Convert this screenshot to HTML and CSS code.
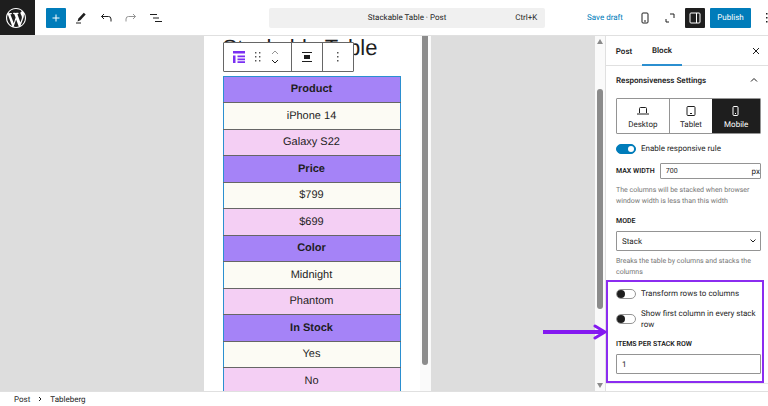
FILE: index.html
```html
<!DOCTYPE html>
<html lang="en">
<head>
    <meta charset="UTF-8">
    <meta name="viewport" content="width=device-width, initial-scale=1.0">
    <link rel="stylesheet" href="styles.css">
    <title>Stackable Table</title>
</head>
<body>
<header class="header">
    <a class="logo" href="#" aria-label="View posts">
        <svg width="20" height="20" viewBox="0 0 20 20" fill="#fff">
            <path d="M20 10c0-5.51-4.49-10-10-10C4.48 0 0 4.49 0 10c0 5.52 4.48 10 10 10 5.51 0 10-4.48 10-10zM7.78 15.37L4.37 6.22c.55-.02 1.17-.08 1.17-.08.5-.06.44-1.13-.06-1.11 0 0-1.45.11-2.37.11-.18 0-.37 0-.58-.01C4.12 2.69 6.87 1.11 10 1.11c2.33 0 4.45.87 6.05 2.34-.68-.11-1.65.39-1.65 1.58 0 .74.45 1.36.9 2.1.35.61.55 1.36.55 2.46 0 1.49-1.4 5-1.4 5l-3.03-8.37c.54-.02.82-.17.82-.17.5-.05.44-1.25-.06-1.22 0 0-1.44.12-2.38.12-.87 0-2.33-.12-2.33-.12-.5-.03-.56 1.2-.06 1.22l.92.08 1.26 3.41zM17.41 10c.24-.64.74-1.87.43-4.25.7 1.29 1.05 2.71 1.05 4.25 0 3.29-1.73 6.24-4.4 7.78.97-2.59 1.94-5.2 2.92-7.78zM6.1 18.09C3.12 16.65 1.11 13.53 1.11 10c0-1.3.23-2.48.72-3.59C3.25 10.3 4.67 14.2 6.1 18.09zm4.03-6.63l2.58 6.98c-.86.29-1.76.45-2.71.45-.79 0-1.57-.11-2.29-.33.81-2.38 1.62-4.74 2.42-7.1z"/>
        </svg>
    </a>
    <div class="tools">
        <button class="tool tool_add" aria-label="Add block">
            <svg width="8" height="8" viewBox="0 0 8 8" stroke="#fff"><path d="M4 .500v7M.500 4h7"/></svg>
        </button>
        <button class="tool" aria-label="Tools">
            <svg width="12" height="12" viewBox="0 0 12 12"><path d="M8.800.800l1.900 1.700-5.300 5.800-2.900 1.100.900-2.900z" fill="#1e1e1e"/><path d="M1 11h5" stroke="#1e1e1e"/></svg>
        </button>
        <button class="tool" aria-label="Undo">
            <svg width="12" height="12" viewBox="0 0 12 12" fill="none" stroke="#1e1e1e"><path d="M4 2L1.500 4.500 4 7M1.500 4.500H8.500Q11 4.500 11 7v2.500"/></svg>
        </button>
        <button class="tool" aria-label="Redo">
            <svg width="12" height="12" viewBox="0 0 12 12" fill="none" stroke="#949494"><path d="M8 2l2.500 2.500L8 7M10.500 4.500H3.500Q1 4.500 1 7v2.500"/></svg>
        </button>
        <button class="tool" aria-label="Document overview">
            <svg width="12" height="12" viewBox="0 0 12 12" stroke="#1e1e1e"><path d="M0 2.500h7M3 6h6M5 9.500h7"/></svg>
        </button>
    </div>
    <button class="command">
        <span class="command-title">Stackable Table · Post</span>
        <span>Ctrl+K</span>
    </button>
    <div class="actions">
        <button class="save">Save draft</button>
        <button class="tool" aria-label="Preview">
            <svg width="8" height="12" viewBox="0 0 8 12" fill="none" stroke="#1e1e1e"><rect x="1" y="1" width="6" height="10" rx="1"/><path d="M3 9h2"/></svg>
        </button>
        <button class="tool" aria-label="View">
            <svg width="10" height="10" viewBox="0 0 10 10" fill="none" stroke="#1e1e1e"><path d="M5 1h4v4M1 6v3h3"/></svg>
        </button>
        <button class="tool tool_active" aria-label="Settings">
            <svg width="12" height="12" viewBox="0 0 12 12" fill="none" stroke="#fff"><rect x="1" y="1" width="10" height="10" rx="1"/><path d="M7.500 1v10"/></svg>
        </button>
        <button class="publish">Publish</button>
        <button class="more" aria-label="Options">
            <svg width="2" height="12" viewBox="0 0 2 12" fill="#1e1e1e"><path d="M0 1h1.500v1.500H0zM0 5h1.500v1.500H0zM0 9h1.500v1.500H0z"/></svg>
        </button>
    </div>
</header>

<div class="workspace">
    <main class="canvas">
        <div class="device">
            <div class="post">
                <h1 class="post-title">Stackable Table</h1>
                <table class="table">
                    <tbody>
                    <tr><th>Product</th></tr>
                    <tr><td>iPhone 14</td></tr>
                    <tr><td class="pink">Galaxy S22</td></tr>
                    <tr><th>Price</th></tr>
                    <tr><td>$799</td></tr>
                    <tr><td class="pink">$699</td></tr>
                    <tr><th>Color</th></tr>
                    <tr><td>Midnight</td></tr>
                    <tr><td class="pink">Phantom</td></tr>
                    <tr><th>In Stock</th></tr>
                    <tr><td>Yes</td></tr>
                    <tr><td class="pink">No</td></tr>
                    </tbody>
                </table>
                <div class="toolbar">
                    <div class="toolbar-group toolbar-group_wide">
                        <button aria-label="Tableberg">
                            <svg width="12" height="12" viewBox="0 0 12 12" fill="#7a2ff2"><path d="M0 0h12v2.500H0zM0 4.500h2.500V12H0zM4.500 4.500H12v1.800H4.500zM4.500 7.500H12v1.800H4.500zM4.500 10.300H12V12H4.500z"/></svg>
                        </button>
                        <button aria-label="Drag">
                            <svg width="6" height="10" viewBox="0 0 6 10" fill="#555"><path d="M0 0h1.400v1.400H0zM4 0h1.400v1.400H4zM0 4h1.400v1.400H0zM4 4h1.400v1.400H4zM0 8h1.400v1.400H0zM4 8h1.400v1.400H4z"/></svg>
                        </button>
                        <button aria-label="Move up or down">
                            <svg width="8" height="14" viewBox="0 0 8 14" fill="none"><path d="M1 4l3-3 3 3" stroke="#949494"/><path d="M1 10l3 3 3-3" stroke="#1e1e1e"/></svg>
                        </button>
                    </div>
                    <div class="toolbar-group">
                        <button aria-label="Align">
                            <svg width="10" height="12" viewBox="0 0 10 12" fill="#1e1e1e"><path d="M0 1h10v1H0zM2 4h6v4H2zM0 10h10v1H0z"/></svg>
                        </button>
                    </div>
                    <div class="toolbar-group">
                        <button aria-label="Options">
                            <svg width="2" height="10" viewBox="0 0 2 10" fill="#555"><path d="M0 0h1.500v1.500H0zM0 4h1.500v1.500H0zM0 8h1.500v1.500H0z"/></svg>
                        </button>
                    </div>
                </div>
            </div>
            <div class="device-scroll"><div class="thumb"></div></div>
        </div>
    </main>

    <div class="side-scroll">
        <div class="scroll-arrow"></div>
        <div class="thumb side-thumb"></div>
        <div class="scroll-arrow scroll-arrow_down"></div>
    </div>

    <aside class="sidebar">
        <div class="tabs">
            <button class="tab">Post</button>
            <button class="tab tab_active">Block</button>
            <button class="close" aria-label="Close settings">
                <svg width="8" height="8" viewBox="0 0 8 8" stroke="#1e1e1e"><path d="M1 1l6 6M7 1L1 7"/></svg>
            </button>
        </div>
        <section class="panel">
            <button class="panel-title">
                <span>Responsiveness Settings</span>
                <svg width="8" height="6" viewBox="0 0 8 6" fill="none" stroke="#1e1e1e"><path d="M1 4.500l3-3 3 3"/></svg>
            </button>
            <div class="devices">
                <button class="device-btn device-btn_wide">
                    <svg width="12" height="12" viewBox="0 0 12 12" fill="none" stroke="#1e1e1e"><path d="M2.500 8V3.500q0-1 1-1h5q1 0 1 1V8M0 9h12"/></svg>
                    Desktop
                </button>
                <button class="device-btn">
                    <svg width="10" height="12" viewBox="0 0 10 12" fill="none" stroke="#1e1e1e"><rect x="1" y="1.500" width="8" height="9" rx="1"/><path d="M4 8.500h2"/></svg>
                    Tablet
                </button>
                <button class="device-btn device-btn_active">
                    <svg width="8" height="12" viewBox="0 0 8 12" fill="none" stroke="#fff"><rect x="1" y="1.500" width="5" height="9" rx="1"/><path d="M3 8.500h1"/></svg>
                    Mobile
                </button>
            </div>
            <label class="toggle">
                <input type="checkbox" class="switch" checked>
                <span>Enable responsive rule</span>
            </label>
            <div class="width-row">
                <label class="label" for="max-width">MAX WIDTH</label>
                <div class="width-field">
                    <input id="max-width" class="width-input" type="text" value="700">
                    <span>px</span>
                </div>
            </div>
            <p class="help">The columns will be stacked when browser window width is less than this width</p>
            <label class="label label_mode" for="mode">MODE</label>
            <div class="select-wrap">
                <select id="mode" class="field"><option>Stack</option></select>
                <svg class="chevron" width="8" height="6" viewBox="0 0 8 6" fill="none" stroke="#1e1e1e"><path d="M1.500 1.500L4 4l2.500-2.500"/></svg>
            </div>
            <p class="help">Breaks the table by columns and stacks the columns</p>
            <div class="stack-options">
                <label class="toggle">
                    <input type="checkbox" class="switch">
                    <span>Transform rows to columns</span>
                </label>
                <label class="toggle">
                    <input type="checkbox" class="switch">
                    <span>Show first column in every stack row</span>
                </label>
                <label class="label label_items" for="items">ITEMS PER STACK ROW</label>
                <input id="items" class="field" type="text" value="1">
                <svg class="pointer" width="66" height="16" viewBox="0 0 66 16" fill="none" stroke="#8419f0"><path d="M1 8h60" stroke-width="4"/><path d="M53 2l10 6-10 6" stroke-width="3" stroke-linecap="round" stroke-linejoin="round"/></svg>
            </div>
        </section>
    </aside>
</div>

<footer class="footer">
    <a href="#">Post</a>
    <svg width="4" height="6" viewBox="0 0 4 6" fill="none" stroke="#1e1e1e"><path d="M1 1l2 2-2 2"/></svg>
    <a href="#">Tableberg</a>
</footer>
</body>
</html>
```
FILE: styles.css
```css
* {
    box-sizing: border-box;
}

body {
    margin: 0;
    height: 100vh;
    display: flex;
    flex-direction: column;
    overflow: hidden;
    font-family: Roboto, "Open Sans", sans-serif;
    font-size: 8px;
    line-height: 11px;
    text-rendering: geometricPrecision;
    color: #1e1e1e;
    background: #fff;
}

button,
input,
select {
    font: inherit;
    text-rendering: inherit;
    color: inherit;
}

button {
    display: flex;
    align-items: center;
    justify-content: center;
    padding: 0;
    border: none;
    background: transparent;
}

svg {
    display: block;
    flex: none;
}

a {
    color: inherit;
    text-decoration: none;
}

/* header */
.header {
    flex: none;
    height: 36px;
    display: flex;
    align-items: center;
    border-bottom: 1px solid #e0e0e0;
    overflow: hidden;
}

.logo {
    width: 35px;
    height: 36px;
    display: flex;
    align-items: center;
    justify-content: center;
    padding-right: 3px;
    background: #1e1e1e;
}

.tools {
    flex: 1;
    display: flex;
    gap: 5px;
    padding-left: 11px;
}

.tool {
    width: 20px;
    height: 20px;
    border-radius: 1px;
}

.tool_add {
    background: #007cba;
}

.tool_active {
    background: #1e1e1e;
}

.command {
    width: 36%;
    height: 20px;
    padding: 0 8px;
    border-radius: 2px;
    background: #f0f0f0;
}

.command-title {
    flex: 1;
    padding-left: 22px;
}

.actions {
    flex: 1;
    display: flex;
    align-items: center;
    justify-content: flex-end;
    gap: 5px;
}

.save {
    margin-right: 7px;
    color: #007cba;
}

.publish {
    width: 41px;
    height: 20px;
    border-radius: 1px;
    background: #007cba;
    color: #fff;
}

.more {
    width: 12px;
    height: 20px;
    justify-content: flex-end;
}

/* canvas */
.workspace {
    flex: 1;
    min-height: 0;
    display: flex;
}

.canvas {
    flex: 1;
    display: flex;
    justify-content: center;
    padding-left: 39px;
    background: #ddd;
    overflow: hidden;
}

.device {
    width: 227px;
    display: flex;
    background: #fff;
}

.post {
    flex: 1;
    position: relative;
    padding: 0 19px;
    font-family: "Liberation Sans", Arial, sans-serif;
}

.post-title {
    margin: 0 0 16px;
    font-size: 22px;
    line-height: 24px;
    font-weight: 400;
    white-space: nowrap;
}

.table {
    width: 100%;
    border-collapse: collapse;
    font-size: 11px;
    line-height: 13px;
    text-align: center;
}

.table th,
.table td {
    height: 26px;
    padding: 0;
    border: 1px solid #666;
    border-left-color: #2b8fd0;
    border-right-color: #2b8fd0;
    background: #fcfbf4;
}

.table tr:nth-child(even) td,
.table tr:nth-child(even) th {
    height: 27px;
}

.table tr th {
    background: #a583f7;
}

.table tr:first-child th {
    border-top-color: #2b8fd0;
}

.table tr .pink {
    background: #f4cff4;
}

.toolbar {
    position: absolute;
    top: 6px;
    left: 19px;
    height: 30px;
    display: flex;
    border: 1px solid #666;
    border-radius: 1px;
    background: #fff;
}

.toolbar-group {
    width: 31px;
    display: flex;
    align-items: center;
    justify-content: center;
}

.toolbar-group + .toolbar-group {
    border-left: 1px solid #666;
}

.toolbar-group_wide {
    width: 67px;
    gap: 10px;
    padding-right: 2px;
}

.device-scroll {
    width: 11px;
    padding: 0 2px;
    background: #fafafa;
}

.thumb {
    width: 6px;
    height: 329px;
    border-radius: 0 0 3px 3px;
    background: #8b8b8b;
}

.side-scroll {
    width: 10px;
    display: flex;
    flex-direction: column;
    align-items: center;
    padding: 3px 0;
    background: #fafafa;
}

.side-thumb {
    height: 220px;
    margin: 45px 0 auto;
    border-radius: 3px;
}

.scroll-arrow {
    border: 3px solid transparent;
    border-top: 0;
    border-bottom: 5px solid #8b8b8b;
}

.scroll-arrow_down {
    border-top: 5px solid #8b8b8b;
    border-bottom: 0;
}

/* sidebar */
.sidebar {
    width: 163px;
    border-left: 1px solid #e0e0e0;
}

.tabs {
    height: 30px;
    display: flex;
    border-bottom: 1px solid #e0e0e0;
    font-weight: 600;
}

.tab {
    width: 36px;
    height: 30px;
}

.tab_active {
    width: 40px;
    border-bottom: 2px solid #2b8fd0;
}

.close {
    width: 16px;
    margin-left: auto;
    margin-right: 4px;
}

.panel {
    padding: 0 7px 0 10px;
    border-bottom: 1px solid #e8e8e8;
}

.panel-title {
    width: 100%;
    height: 28px;
    justify-content: space-between;
    padding-right: 3px;
    font-weight: 600;
    white-space: nowrap;
}

.devices {
    display: flex;
    height: 36px;
    margin: 4px 0 9px;
    border: 1px solid #949494;
    border-radius: 1px;
}

.device-btn {
    flex: 43;
    flex-direction: column;
    gap: 2px;
    padding-top: 2px;
}

.device-btn_wide {
    flex: 52;
    border-right: 1px solid #949494;
}

.device-btn_active {
    flex: 48;
    background: #1e1e1e;
    color: #fff;
}

.toggle {
    display: flex;
    align-items: center;
    gap: 5px;
}

.switch {
    appearance: none;
    flex: none;
    width: 20px;
    height: 10px;
    margin: 0;
    padding: 1px;
    border: 1px solid #949494;
    border-radius: 5px;
    background: #fff;
}

.switch::before {
    content: "";
    display: block;
    width: 8px;
    height: 8px;
    margin: -1px 0 0 -1px;
    border-radius: 50%;
    background: #1e1e1e;
}

.switch:checked {
    border-color: #007cba;
    background: #007cba;
}

.switch:checked::before {
    width: 6px;
    height: 6px;
    margin: 0 0 0 auto;
    background: #fff;
}

.label {
    font-size: 7px;
    font-weight: 600;
    white-space: nowrap;
}

.width-row {
    display: flex;
    align-items: center;
    gap: 5px;
    margin: 9px 0 6px;
}

.width-field {
    flex: 1;
    min-width: 0;
    height: 16px;
    display: flex;
    align-items: center;
    border: 1px solid #949494;
    border-radius: 1px;
}

.width-input {
    flex: 1;
    min-width: 0;
    padding: 0 5px;
    border: none;
    background: transparent;
    font-size: 7px;
}

.help {
    margin: 0;
    font-size: 7px;
    color: #757575;
}

.label_mode,
.label_items {
    display: block;
}

.label_mode {
    margin: 9px 0 4px;
}

.field {
    display: block;
    appearance: none;
    width: 100%;
    height: 20px;
    padding: 0 5px;
    border: 1px solid #949494;
    border-radius: 1px;
    background: #fff;
}

.select-wrap {
    position: relative;
    margin-bottom: 5px;
}

.chevron {
    position: absolute;
    top: 7px;
    right: 4px;
}

/* highlighted block of stack settings */
.stack-options {
    position: relative;
    margin: 2px -3px 0 -10px;
    padding: 6px 1px 7px 8px;
    border: 2px solid #8b2cf0;
}

.stack-options .toggle + .toggle {
    margin-top: 9px;
}

.label_items {
    margin: 9px 0 4px;
}

.pointer {
    position: absolute;
    right: 100%;
    top: 42px;
}

/* footer */
.footer {
    flex: none;
    height: 15px;
    display: flex;
    align-items: center;
    gap: 8px;
    padding-left: 14px;
    border-top: 1px solid #e0e0e0;
}
```
